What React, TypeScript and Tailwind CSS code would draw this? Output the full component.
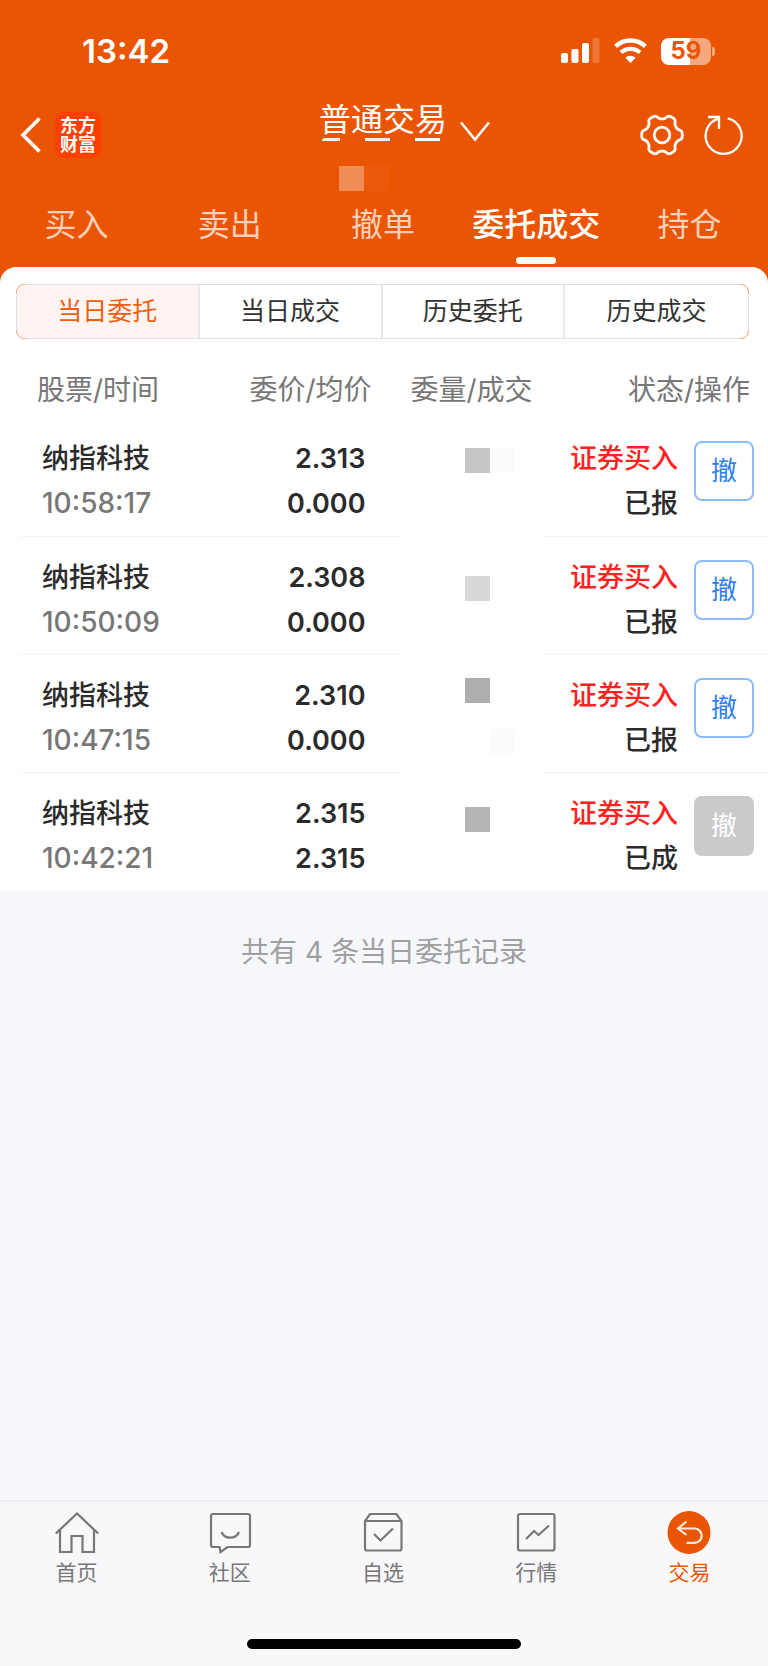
import { useState, ReactNode } from "react"

interface Order {
  name: string
  time: string
  price: string
  avg: string
  status: string
  done: boolean
  mask: ReactNode
}

const orders: Order[] = [
  {
    name: "纳指科技",
    time: "10:58:17",
    price: "2.313",
    avg: "0.000",
    status: "已报",
    done: false,
    mask: (
      <div className="flex pt-[30px]">
        <div className="size-[25px] bg-[#c6c6c6]" />
        <div className="size-[25px] bg-[#fbfbfb]" />
      </div>
    ),
  },
  {
    name: "纳指科技",
    time: "10:50:09",
    price: "2.308",
    avg: "0.000",
    status: "已报",
    done: false,
    mask: (
      <div className="pt-[40px]">
        <div className="size-[25px] bg-[#d8d8d8]" />
      </div>
    ),
  },
  {
    name: "纳指科技",
    time: "10:47:15",
    price: "2.310",
    avg: "0.000",
    status: "已报",
    done: false,
    mask: (
      <div className="pt-[24px]">
        <div className="size-[25px] bg-[#aeaeae]" />
        <div className="mt-[26px] ml-[25px] size-[25px] bg-[#fbfbfb]" />
      </div>
    ),
  },
  {
    name: "纳指科技",
    time: "10:42:21",
    price: "2.315",
    avg: "2.315",
    status: "已成",
    done: true,
    mask: (
      <div className="pt-[35px]">
        <div className="size-[25px] bg-[#b5b5b5]" />
      </div>
    ),
  },
]

// six-lobed outline of the settings gear
const gearPath = () => {
  const pts: string[] = []
  for (let i = 0; i < 120; i++) {
    const a = (i / 120) * Math.PI * 2
    const r = 18.2 + 2.2 * Math.tanh(1.8 * Math.cos(6 * a) + 0.2)
    pts.push(`${(22 + r * Math.cos(a)).toFixed(2)} ${(22 + r * Math.sin(a)).toFixed(2)}`)
  }
  return `M${pts.join("L")}Z`
}

const StatusBar = () => {
  return (
    <div className="flex h-[102px] items-center justify-between pr-[53px] pl-[82px] text-white">
      <span className="text-[33px] leading-none font-semibold">13:42</span>
      <div className="flex items-center">
        <svg width="39" height="26" viewBox="0 0 39 26" fill="currentColor">
          <rect x="0" y="15" width="7" height="10" rx="2" />
          <rect x="10.5" y="11" width="7" height="14" rx="2" />
          <rect x="21" y="5" width="7" height="20" rx="2" />
          <rect x="31.5" y="0" width="7" height="25" rx="2" opacity="0.2" />
        </svg>
        <svg className="ml-[14px]" width="33" height="26" viewBox="0 0 33 26" fill="none" stroke="currentColor">
          <path d="M1.6 8.4C9.8.6 23.2.6 31.4 8.4" strokeWidth="4.4" />
          <path d="M7 14.600c5.300-5.100 13.700-5.100 19 0" strokeWidth="4.2" />
          <path d="M16.5 25l-5.2-5.3c2.9-2.7 7.5-2.7 10.4 0z" fill="currentColor" stroke="none" />
        </svg>
        <div className="ml-[14px] flex h-[27px] w-[50px] items-center justify-center rounded-lg bg-linear-to-r from-white from-59% to-[#f5a880] to-59% text-[24px] leading-none font-bold text-[#ea5504]">
          59
        </div>
        <div className="ml-px h-[9px] w-[3px] rounded-r-full bg-[#f5a880]" />
      </div>
    </div>
  )
}

const TitleBar = () => {
  return (
    <div className="grid h-[91px] grid-cols-[1fr_auto_1fr] items-start text-white">
      <div className="flex h-[66px] items-center pl-[20px]">
        <button aria-label="返回">
          <svg width="22" height="36" viewBox="0 0 22 36" fill="none" stroke="currentColor" strokeWidth="3.6">
            <path d="M19.5 1.5L3 18l16.500 16.500" />
          </svg>
        </button>
        <div className="ml-[13px] flex size-[46px] flex-col items-center justify-center rounded-lg bg-[#ff4000] text-[18px] leading-[19px] font-bold">
          <span>东方</span>
          <span>财富</span>
        </div>
      </div>
      <div>
        <button className="flex items-start gap-[13px] pl-[41px]">
          <span className="block">
            <span className="block text-[32px] leading-[36px]">普通交易</span>
            <span className="flex gap-[25px] pl-[3px]">
              <span className="h-[3px] w-[18px] rounded-tl-full bg-white/90" />
              <span className="h-[3px] w-[25px] bg-white/90" />
              <span className="h-[3px] w-[25px] bg-white" />
            </span>
          </span>
          <svg width="30" height="40" viewBox="0 0 30 40" fill="none" stroke="currentColor" strokeWidth="2.600">
            <path d="M1 20.500l14 17 14-17" />
          </svg>
        </button>
        <div className="mt-[24px] flex pl-[61px]">
          <div className="size-[25px] bg-[#f18d57]" />
          <div className="size-[25px] bg-[#eb5a0c]" />
        </div>
      </div>
      <div className="flex h-[66px] items-center justify-end gap-[20px] pr-[24px]">
        <button aria-label="设置">
          <svg width="44" height="44" viewBox="0 0 44 44" fill="none" stroke="currentColor" strokeWidth="2.800">
            <path d={gearPath()} strokeLinejoin="round" />
            <circle cx="22" cy="22" r="7.800" />
          </svg>
        </button>
        <button aria-label="刷新">
          <svg width="40" height="44" viewBox="0 0 40 44" fill="none" stroke="currentColor" strokeWidth="2.300">
            <path d="M23.700 5.300A18 18 0 1 1 14.500 5.600" />
            <path d="M4 4h11v12" />
          </svg>
        </button>
      </div>
    </div>
  )
}

const tabs = ["买入", "卖出", "撤单", "委托成交", "持仓"]

const TopTabs = () => {
  const [active, setActive] = useState("委托成交")

  return (
    <div className="grid h-[74px] grid-cols-5 pt-2 pr-[2px]">
      {tabs.map((tab) => (
        <button
          key={tab}
          onClick={() => setActive(tab)}
          className={`flex flex-col items-center text-[32px] leading-[48px] whitespace-nowrap ${
            active === tab ? "font-medium text-white" : "text-[#fbd0b8]"
          }`}
        >
          {tab}
          {active === tab && <span className="mt-2 h-[7px] w-10 rounded-full bg-white" />}
        </button>
      ))}
    </div>
  )
}

const filters = ["当日委托", "当日成交", "历史委托", "历史成交"]

const Filters = () => {
  const [active, setActive] = useState("当日委托")

  return (
    <div className="relative mr-[19px] ml-[16px] rounded-lg border border-[#f3a273]">
      <div className="grid h-[53px] grid-cols-4">
        {filters.map((filter) => (
          <button
            key={filter}
            onClick={() => setActive(filter)}
            className={`border-r-2 border-[#e6e6ee] text-[25px] first:rounded-l-lg last:border-r-0 ${
              active === filter ? "bg-[#fff4f1] text-[#ee5f12]" : "text-[#333333]"
            }`}
          >
            {filter}
          </button>
        ))}
      </div>
      {/* grey edges, only the corners stay orange */}
      <span className="pointer-events-none absolute inset-x-2 -inset-y-px border-y border-[#e0e0e8]" />
      <span className="pointer-events-none absolute -inset-x-px inset-y-2 border-x border-[#e0e0e8]" />
    </div>
  )
}

const OrderTable = () => {
  return (
    <div className="pl-5">
      <table className="w-full table-fixed text-[27px] leading-[45px] text-[#2b2b2b]">
        <thead>
          <tr className="h-[79px] text-[28px] whitespace-nowrap text-[#777777]">
            <th className="w-[23%] pt-[23px] pl-[17px] text-left font-normal">股票/时间</th>
            <th className="w-[28%] pt-[23px] pr-[30px] text-right font-normal">委价/均价</th>
            <th className="w-[19%] pt-[23px] pl-[9px] text-left font-normal">委量/成交</th>
            <th className="w-[30%] pt-[23px] pr-[18px] text-right font-normal">状态/操作</th>
          </tr>
        </thead>
        <tbody>
          {orders.map((order) => (
            <tr key={order.time} className="group h-[118px] align-top">
              <td className="border-b border-[#f4f4f6] pt-[18px] pl-[22px] group-last:border-transparent">
                <div className="font-medium">{order.name}</div>
                <div className="text-[28px] font-medium text-[#777777]">{order.time}</div>
              </td>
              <td className="border-b border-[#f4f4f6] pt-[18px] pr-[36px] text-right font-semibold group-last:border-transparent">
                <div>{order.price}</div>
                <div>{order.avg}</div>
              </td>
              <td className="pl-[64px]">{order.mask}</td>
              <td className="border-b border-[#f4f4f6] pt-[18px] pr-[14px] group-last:border-transparent">
                <div className="flex items-start justify-end gap-[16px] font-medium">
                  <div className="text-right whitespace-nowrap">
                    <div className="text-[#ff2222]">证券买入</div>
                    <div>{order.status}</div>
                  </div>
                  <button
                    disabled={order.done}
                    className={`mt-[5px] size-[60px] rounded-lg text-[26px] leading-none font-normal ${
                      order.done ? "bg-[#cacaca] text-white" : "border-2 border-[#8fbcf8] text-[#2f80ed]"
                    }`}
                  >
                    撤
                  </button>
                </div>
              </td>
            </tr>
          ))}
        </tbody>
      </table>
    </div>
  )
}

const navItems = [
  {
    label: "首页",
    icon: (
      <>
        <path d="M.800 22.500L22 2.500l21.200 20" />
        <path d="M5 18.500V41h11.500V25h11v16H39V18.500" />
      </>
    ),
  },
  {
    label: "社区",
    icon: (
      <>
        <path d="M5 3h35a2 2 0 0 1 2 2v29a2 2 0 0 1-2 2H19.500L12.500 41 11.500 36H5a2 2 0 0 1-2-2V5a2 2 0 0 1 2-2z" />
        <path d="M13.500 21c3 7.500 14.500 7.500 17.500 0" />
      </>
    ),
  },
  {
    label: "自选",
    icon: (
      <>
        <path d="M4 10v27.500a2 2 0 0 0 2 2h32.500a2 2 0 0 0 2-2V10l-5-7h-26.500z" />
        <path d="M4.500 10h35.500" />
        <path d="M13 23l6.500 6.500L32 17.500" />
      </>
    ),
  },
  {
    label: "行情",
    icon: (
      <>
        <rect x="4" y="3" width="36.500" height="36.500" rx="2" />
        <path d="M12 28l8-8 4.500 4L35 14.500" />
      </>
    ),
  },
  {
    label: "交易",
    icon: (
      <>
        <circle cx="22" cy="21.500" r="21.500" fill="#ea5504" stroke="none" />
        <path d="M19.500 10.500l-8.500 7 8.500 6.500M11 17.500h16.500a7.200 7.200 0 0 1 0 14.400h-8" stroke="#ffe8dc" />
      </>
    ),
  },
]

const BottomNav = () => {
  const [active, setActive] = useState("交易")

  return (
    <nav className="mt-auto border-t-2 border-[#eceef3] bg-[#f8f8fb] pt-[9px] pb-[17px]">
      <div className="grid grid-cols-5 pr-[2px]">
        {navItems.map((item) => (
          <button
            key={item.label}
            onClick={() => setActive(item.label)}
            className={`flex flex-col items-center text-[21px] leading-[36px] ${
              active === item.label ? "text-[#ea5504]" : "text-[#777777]"
            }`}
          >
            <svg width="44" height="44" viewBox="0 0 44 44" fill="none" stroke="currentColor" strokeWidth="2.200">
              {item.icon}
            </svg>
            {item.label}
          </button>
        ))}
      </div>
      <div className="mx-auto mt-12 h-[10px] w-[274px] rounded-full bg-black" />
    </nav>
  )
}

export default function App() {
  return (
    <div
      lang="zh-CN"
      className="flex min-h-screen flex-col bg-[#f6f7fa] font-['Inter','Noto_Sans_CJK_SC',sans-serif]"
    >
      <header className="bg-[#ea5504]">
        <StatusBar />
        <TitleBar />
        <TopTabs />
      </header>
      <main>
        <div className="bg-linear-to-b from-[#ea5504] from-10% to-white to-10%">
          <div className="rounded-t-2xl bg-white pt-[17px]">
            <Filters />
            <OrderTable />
          </div>
        </div>
        <p className="mt-[40px] text-center text-[28px] leading-[42px] text-[#a0a0a0]">共有 4 条当日委托记录</p>
      </main>
      <BottomNav />
    </div>
  )
}
